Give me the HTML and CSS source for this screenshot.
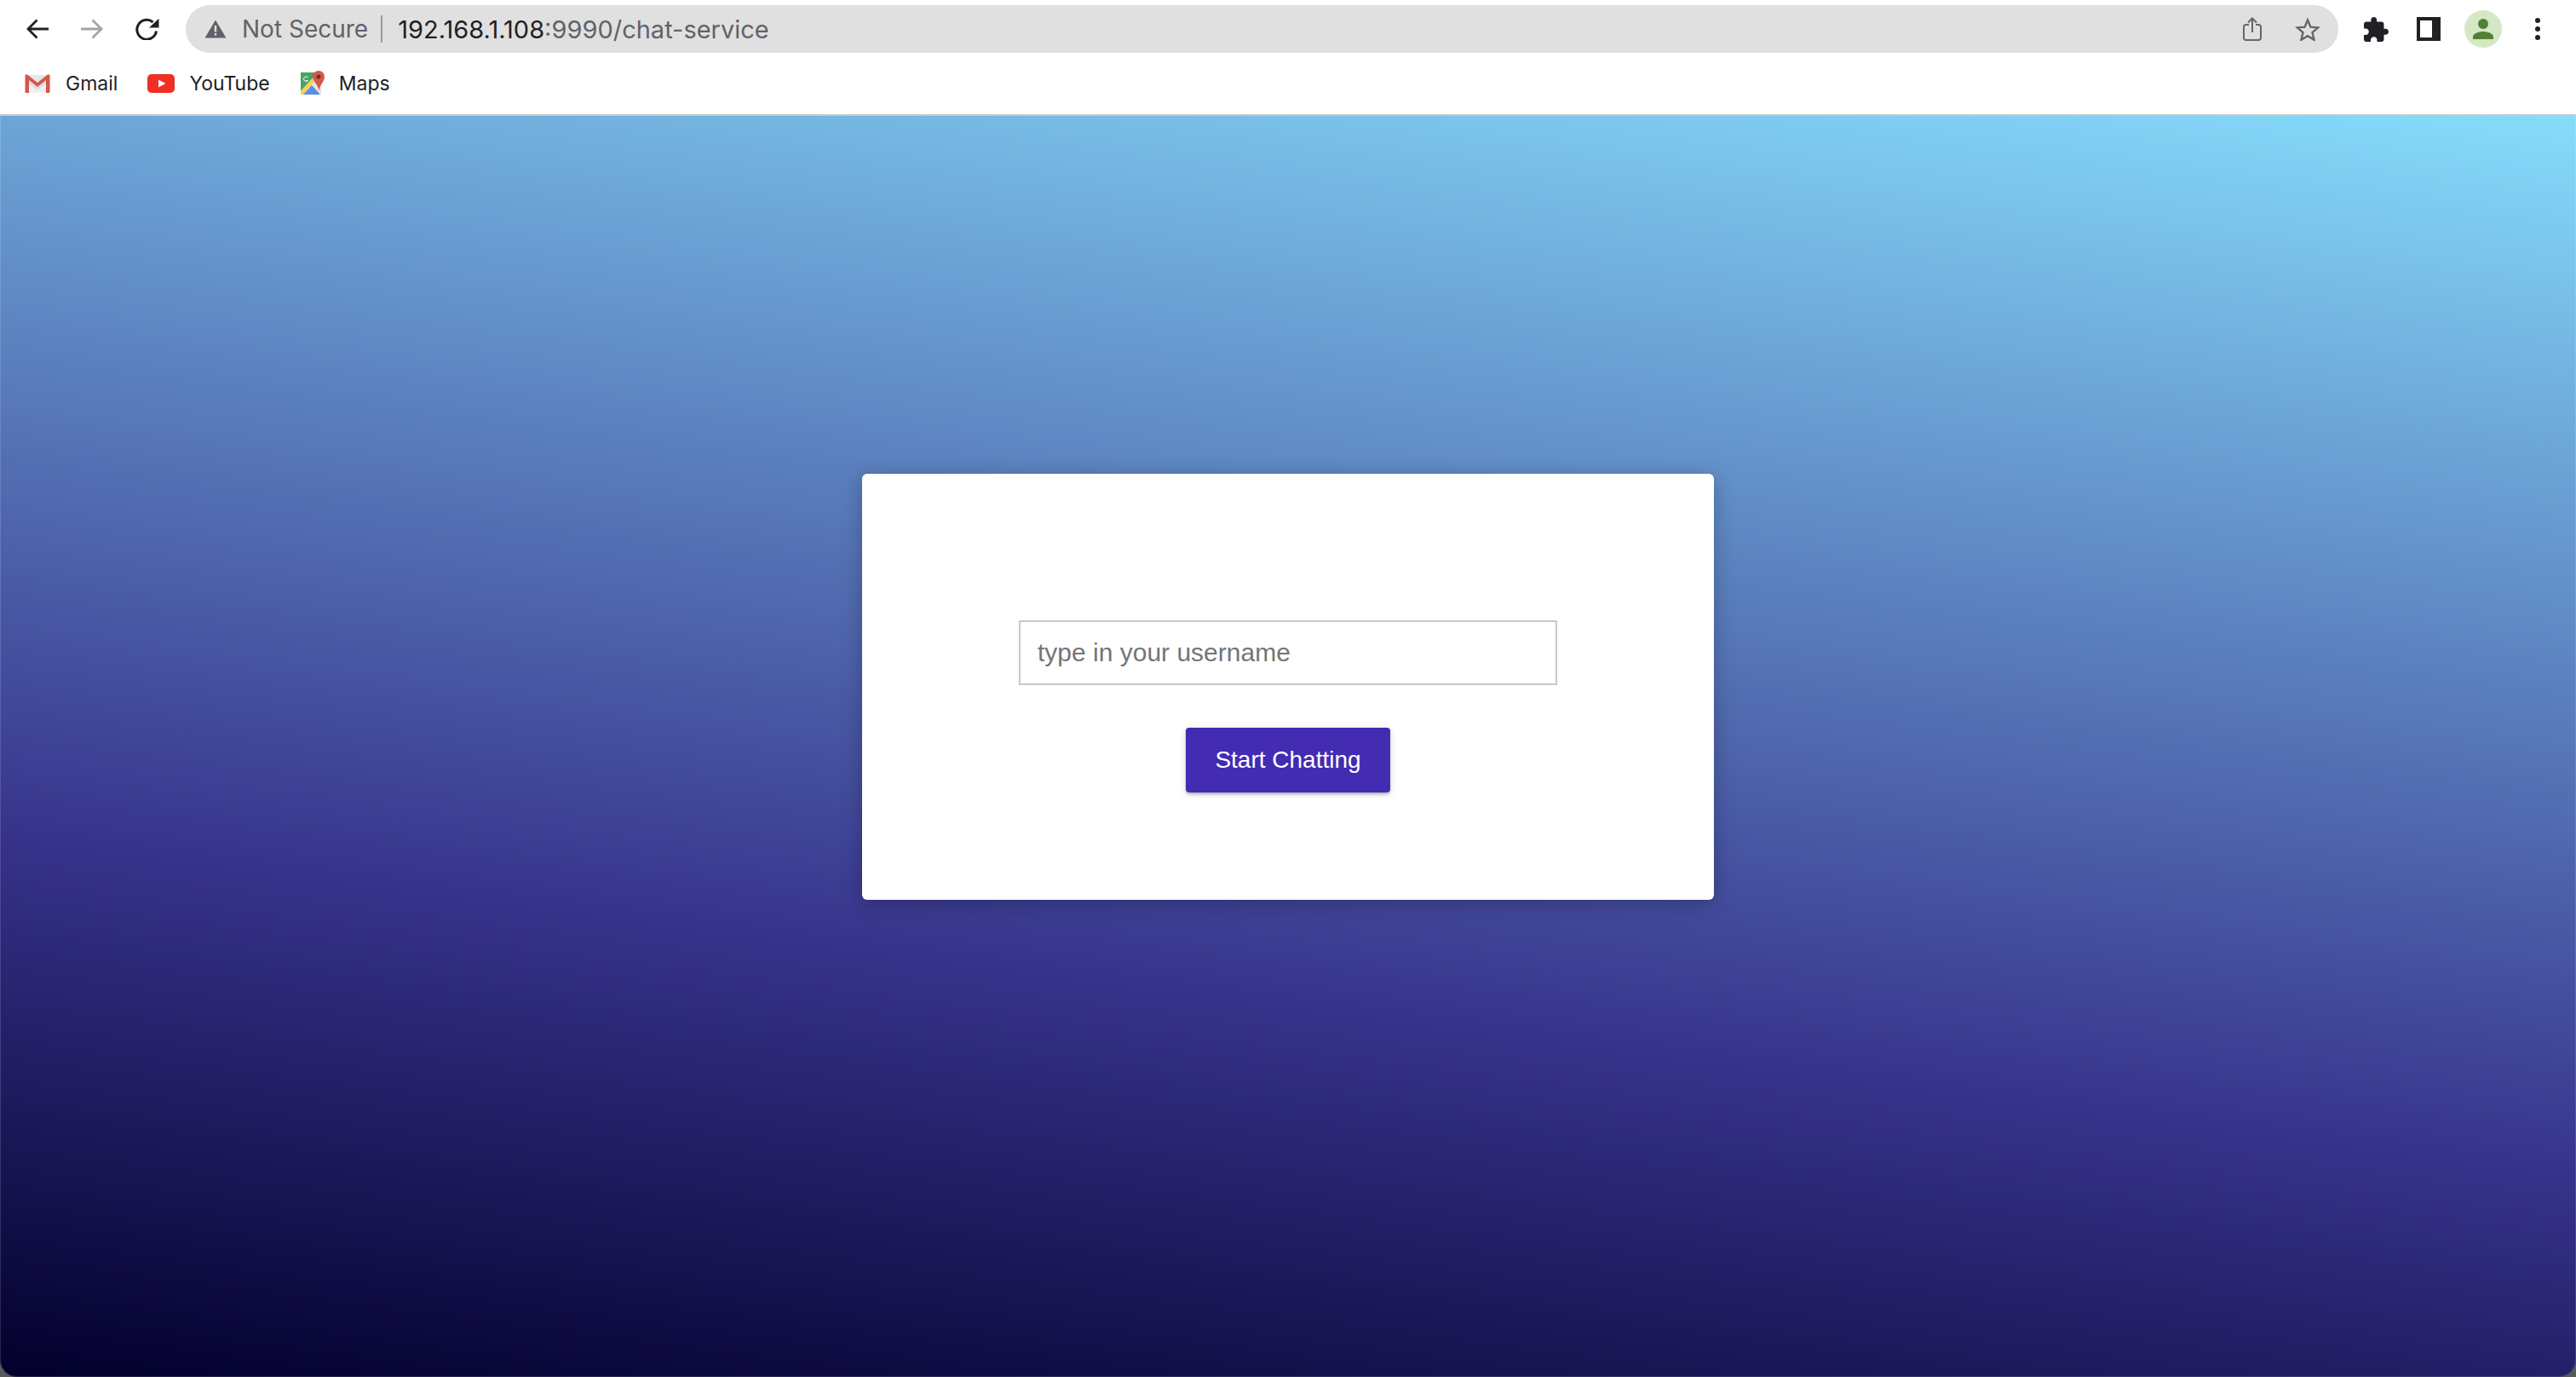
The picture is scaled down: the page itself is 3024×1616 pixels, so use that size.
FILE: index.html
```
<!DOCTYPE html>
<html lang="en">
<head>
<meta charset="utf-8">
<title>Chat service</title>
<link rel="stylesheet" href="styles.css">
</head>
<body>
<header class="chrome">
  <div class="toolbar">
    <svg class="ic ic-back" viewBox="0 0 28 24"><path d="M27 12H3M13.500 1.500 3 12l10.500 10.500" fill="none" stroke="#202124" stroke-width="2.800"/></svg>
    <svg class="ic ic-forward" viewBox="0 0 28 24"><path d="M1 12h24M14.500 1.500 25 12 14.500 22.500" fill="none" stroke="#a3a4a6" stroke-width="2.800"/></svg>
    <svg class="ic ic-reload" viewBox="0 0 28 26"><path d="M24.500 15.500A11.400 11.400 0 1 1 20.500 5" fill="none" stroke="#202124" stroke-width="3"/><path d="M27.500 0.700V11.500H16Z" fill="#202124"/></svg>
    <div class="omnibox">
      <svg class="ic-warn" viewBox="0 0 26 22"><path d="M13 0.500 25.500 21.500H0.500Z" fill="#5f6368"/><path d="M11.800 7h2.400v7.500h-2.400zM11.800 16h2.400v2.500h-2.400z" fill="#e0e0e0"/></svg>
      <span class="security">Not Secure</span>
      <span class="divider"></span>
      <span class="url"><span class="host">192.168.1.108</span>:9990/chat-service</span>
      <svg class="ic-share" viewBox="0 0 22 28"><path d="M7 9H3.500A2.500 2.500 0 0 0 1 11.500v13A2.500 2.500 0 0 0 3.500 27h15a2.500 2.500 0 0 0 2.500-2.500v-13A2.500 2.500 0 0 0 18.500 9H15" fill="none" stroke="#666" stroke-width="2"/><path d="M11 18V2M6 6.500 11 1.500l5 5" fill="none" stroke="#666" stroke-width="2"/></svg>
      <svg class="ic-star" viewBox="0 0 30 28"><path d="M15 3.500 18.400 11.700 27.200 12.400 20.500 18.200 22.600 26.800 15 22.200 7.400 26.800 9.500 18.200 2.800 12.400 11.600 11.700Z" fill="none" stroke="#666" stroke-width="2.400"/></svg>
    </div>
    <svg class="ic-ext" viewBox="2 1 21 21"><path d="M20.500 11H19V7c0-1.100-.9-2-2-2h-4V3.500C13 2.120 11.880 1 10.500 1S8 2.120 8 3.500V5H4c-1.100 0-1.990.9-1.990 2v3.800H3.500c1.490 0 2.700 1.210 2.700 2.700s-1.210 2.700-2.700 2.700H2V20c0 1.100.9 2 2 2h3.800v-1.500c0-1.490 1.210-2.700 2.700-2.700 1.490 0 2.700 1.210 2.700 2.700V22H17c1.100 0 2-.9 2-2v-4h1.500c1.380 0 2.500-1.120 2.500-2.500S21.880 11 20.500 11z" fill="#202124"/></svg>
    <span class="ic-panel"></span>
    <span class="avatar"><svg viewBox="0 0 44 44"><circle cx="22" cy="16" r="6" fill="#518135"/><path d="M10 34v-3c0-4 8-6 12-6s12 2 12 6v3z" fill="#518135"/></svg></span>
    <span class="menu"><i></i><i></i><i></i></span>
  </div>
  <nav class="bookmarks">
    <a class="bm bm-gmail">
      <svg class="bi-gmail" viewBox="0 0 30 22"><path d="M1 1h28v21H1z" fill="#f0f0f0"/><path d="M3 1h24L15 10z" fill="#e6e6e6"/><path d="M5 7 15 15 25 7v4L15 19 5 11z" fill="#dedede"/><path d="M0.500 1.500a1 1 0 0 1 1-1H3L15 10 27 0.500h1.500a1 1 0 0 1 1 1V21a1 1 0 0 1-1 1H25V7L15 15 5 7v15H1.500a1 1 0 0 1-1-1z" fill="#d2574a"/></svg>
      <span>Gmail</span>
    </a>
    <a class="bm bm-yt">
      <svg class="bi-yt" viewBox="0 0 32 22"><rect width="32" height="22" rx="5" fill="#ee3124"/><path d="M13 6.500l8.500 4.500-8.500 4.500z" fill="#fff"/></svg>
      <span>YouTube</span>
    </a>
    <a class="bm bm-maps">
      <svg class="bi-maps" viewBox="0 0 29 29"><path d="M1 3h24v26H1z" fill="#e4e4e4"/><path d="M1 3h20L1 25z" fill="#48a463"/><path d="M1 25 21 3h3v1.500L4 29H1z" fill="#f6d34e"/><path d="M4 29 14 18 24 29z" fill="#5b8fe6"/><path d="M22 1a7 7 0 0 1 7 7c0 5-4.500 8-6.500 16-2-8-7.500-11-7.500-16a7 7 0 0 1 7-7z" fill="#cf5b4a"/><circle cx="22" cy="8" r="2.500" fill="#7d2c22"/><path d="M9.500 9A2.800 2.800 0 1 0 9.500 12.500H7" fill="none" stroke="#fff" stroke-width="1"/></svg>
      <span>Maps</span>
    </a>
  </nav>
</header>
<main class="page">
  <section class="card">
    <form class="login">
      <input class="username" type="text" placeholder="type in your username">
      <button class="start" type="button">Start Chatting</button>
    </form>
  </section>
</main>
</body>
</html>
```
FILE: styles.css
```
* { box-sizing: border-box; }
html, body { margin: 0; height: 100%; }
body {
  font-family: "Liberation Sans", Arial, sans-serif;
  display: flex;
  flex-direction: column;
  min-height: 1616px;
  overflow: hidden;
  background: #5a5a58;
}
.chrome {
  height: 136px;
  flex: none;
  background: #fff;
  border-bottom: 2px solid #c9c9c9;
}
.toolbar {
  height: 68px;
  display: flex;
  align-items: center;
}
.ic-back { width: 28px; height: 24px; margin-left: 30px; }
.ic-forward { width: 28px; height: 24px; margin-left: 36px; }
.ic-reload { width: 28px; height: 26px; margin-left: 37px; }
.omnibox {
  width: 2527px;
  height: 56px;
  margin-left: 31px;
  border-radius: 28px;
  background: #e0e0e0;
  display: flex;
  align-items: center;
  padding-left: 22px;
  font-family: Inter, "Liberation Sans", sans-serif;
}
.ic-warn { width: 26px; height: 22px; flex: none; }
.security { margin-left: 18px; font-size: 28px; color: #5f6368; }
.divider { width: 2px; height: 32px; margin-left: 15px; background: #9a9b9d; }
.url { margin-left: 18px; font-size: 29px; color: #5f6368; }
.host { color: #202124; }
.ic-share { width: 22px; height: 28px; margin-left: auto; }
.ic-star { width: 30px; height: 28px; margin-left: 39px; margin-right: 21px; }
.ic-ext { width: 29px; height: 29px; margin-left: 30px; }
.ic-panel {
  width: 28px;
  height: 28px;
  margin-left: 33px;
  border: 4px solid #202124;
  border-right-width: 10px;
}
.avatar { width: 44px; height: 44px; margin-left: 28px; border-radius: 50%; background: #d4e8c5; overflow: hidden; }
.avatar svg { display: block; width: 44px; height: 44px; }
.menu { display: flex; flex-direction: column; gap: 4px; margin-left: 39px; }
.menu i { display: block; width: 6px; height: 6px; border-radius: 50%; background: #202124; }
.bookmarks {
  height: 66px;
  display: flex;
  align-items: center;
  padding: 0 0 6px 29px;
  gap: 35px;
  font-family: Inter, "Liberation Sans", sans-serif;
}
.bm { display: flex; align-items: center; font-size: 23px; color: #202124; }
.bi-gmail { width: 30px; height: 22px; margin-right: 18px; }
.bi-yt { width: 32px; height: 22px; margin-right: 17px; }
.bi-maps { width: 29px; height: 29px; margin-right: 17px; margin-bottom: 3px; }
.page {
  flex: 1;
  display: flex;
  justify-content: center;
  align-items: flex-start;
  padding-top: 420px;
  border: 1px solid rgba(255, 255, 255, 0.14);
  border-top: 0;
  border-radius: 0 0 20px 20px;
  background: linear-gradient(7.500deg, #02002c 0%, #37338c 34%, #86dcfb 100%) border-box;
}
.card {
  width: 1000px;
  height: 500px;
  background: #fff;
  border-radius: 6px;
  box-shadow: 0 4px 24px rgba(0, 0, 0, 0.25);
  display: flex;
  justify-content: center;
}
.login {
  display: flex;
  flex-direction: column;
  align-items: center;
  gap: 50px;
  padding-top: 172px;
}
.username {
  width: 632px;
  height: 76px;
  border: 2px solid #c8c8c8;
  padding: 0 20px;
  font: 30px "Liberation Sans", Arial, sans-serif;
  outline: none;
  background: #fff;
}
.username::placeholder { color: #757575; opacity: 1; }
.start {
  width: 240px;
  height: 76px;
  border: 0;
  border-radius: 4px;
  background: #432cb2;
  color: #fff;
  font: 28px "Liberation Sans", Arial, sans-serif;
  box-shadow: 0 3px 3px -2px rgba(0,0,0,.2), 0 3px 4px rgba(0,0,0,.14), 0 1px 8px rgba(0,0,0,.12);
}
```
